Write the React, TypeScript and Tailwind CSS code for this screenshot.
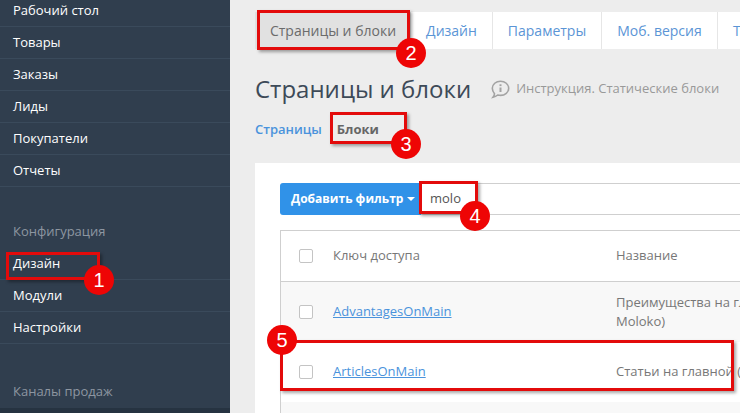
import React, { FC } from "react";

const font = { fontFamily: '"Open Sans", sans-serif' };

const NavRow: FC<{ label: string; bold?: boolean }> = ({ label, bold }) => (
  <div
    className={`h-8 shrink-0 flex items-center pl-[13px] border-b border-[#3a4a5b] text-[13px] text-white ${
      bold ? "font-medium" : ""
    }`}
  >
    {label}
  </div>
);

const Marker: FC<{ box: string; dot: string; n: number }> = ({ box, dot, n }) => (
  <>
    <div className={`absolute border-[3px] border-[#e30b0b] shadow-[2px_2px_3px_rgba(0,0,0,0.35)] ${box}`} />
    <div
      className={`absolute w-[30px] h-[30px] rounded-full bg-[#ee0505] text-white text-[20px] leading-[30px] text-center font-[Liberation_Sans] ${dot}`}
    >
      {n}
    </div>
  </>
);

const Checkbox: FC = () => (
  <div className="w-[14px] h-[14px] rounded-[2px] border border-[#c4c4c4] bg-white shrink-0" />
);

const Tab: FC<{ label: string; w: string }> = ({ label, w }) => (
  <div className={`${w} shrink-0 h-full flex items-center justify-center border-r border-[#e6e6e6] text-[#5b95d6]`}>
    {label}
  </div>
);

const App: FC = () => {
  return (
    <div className="relative w-[740px] h-[413px] overflow-hidden flex bg-[#ededed]" style={font}>
      {/* sidebar */}
      <aside className="w-[230px] h-[418px] bg-[#303e4e] flex flex-col shrink-0 -mt-[5px]">
        <NavRow label="Рабочий стол" />
        <NavRow label="Товары" />
        <NavRow label="Заказы" />
        <NavRow label="Лиды" />
        <NavRow label="Покупатели" />
        <NavRow label="Отчеты" />
        <div className="h-[29px] shrink-0" />
        <div className="h-[32px] shrink-0 flex items-center pl-[13px] text-[13px] text-[#8d96a1]">Конфигурация</div>
        <NavRow label="Дизайн" bold />
        <NavRow label="Модули" bold />
        <NavRow label="Настройки" bold />
        <div className="h-[31px] shrink-0" />
        <div className="h-[33px] shrink-0 flex items-center pl-[13px] text-[13px] text-[#8d96a1]">Каналы продаж</div>
        <div className="flex-1 bg-[#263341]" />
      </aside>

      {/* main */}
      <main className="flex-1 min-w-0 pl-[25px]">
        <div className="flex h-[37px] mt-[12px] text-[14px] whitespace-nowrap">
          <div className="w-[156px] shrink-0 h-full flex items-center justify-center bg-[#e1e1e1] text-[#6b6b6b]">
            Страницы и блоки
          </div>
          <div className="w-[82px] shrink-0 h-full flex items-center justify-center bg-white border-r border-[#e6e6e6] text-[#5b95d6]">
            Дизайн
          </div>
          <div className="flex flex-1 h-full bg-white">
            <Tab label="Параметры" w="w-[109px]" />
            <Tab label="Моб. версия" w="w-[116px]" />
            <div className="flex-1 h-full pl-[15px] flex items-center text-[#5b95d6] overflow-hidden">Т</div>
          </div>
        </div>

        <div className="flex items-center mt-[22px] h-[36px]">
          <h1 className="text-2xl text-[#3d4a58] whitespace-nowrap">Страницы и блоки</h1>
          <svg className="ml-[20px] w-[19px] h-[19px] text-[#a3a3a3]" viewBox="0 0 19 19" fill="none" stroke="currentColor">
            <path d="M9.5 1.2c4.5 0 8.2 3.1 8.2 7.1s-3.7 7.1-8.2 7.1c-1 0-1.900-.2-2.800-.4-1.200 1-2.800 1.900-4.700 2.300.8-1 1.400-2.200 1.500-3.600C2.100 12 1.300 10.300 1.300 8.300c0-4 3.700-7.100 8.200-7.100z" strokeWidth="1.6" />
            <path d="M9.500 7.500v4.500" strokeWidth="2" />
            <path d="M9.500 4.300v1.800" strokeWidth="2" />
          </svg>
          <span className="ml-[6px] text-[13px] text-[#999] whitespace-nowrap">Инструкция. Статические блоки</span>
        </div>

        <div className="flex items-center mt-[13px] h-[20px] text-[13px] font-semibold">
          <span className="text-[#4a93dc]">Страницы</span>
          <span className="ml-[15px] text-[#666] font-bold">Блоки</span>
        </div>

        {/* card */}
        <div className="mt-[23px] bg-white h-[260px] pl-[25px] pt-[20px]">
          <div className="flex h-[32px]">
            <div className="w-[141px] shrink-0 h-full rounded-l-[3px] bg-[#3092e8] text-white text-[12px] font-bold flex items-center pl-[11px] whitespace-nowrap">
              Добавить фильтр
              <span className="ml-[4px] w-0 h-0 border-x-[4px] border-x-transparent border-t-[4px] border-t-white" />
            </div>
            <div className="flex-1 border-y border-[#cfcfcf] text-[13px] text-[#555] flex items-center pl-[9px]">molo</div>
          </div>

          <div className="mt-[15px] border-l border-t border-[#cfcfcf] text-[13px] text-[#777]">
            <div className="h-[51px] flex items-center border-b border-[#cfcfcf]">
              <div className="w-[52px] shrink-0 pl-[18px]"><Checkbox /></div>
              <div className="w-[283px] shrink-0">Ключ доступа</div>
              <div>Название</div>
            </div>
            <div className="h-[60px] flex items-center bg-[#f8f8f8]">
              <div className="w-[52px] shrink-0 pl-[18px]"><Checkbox /></div>
              <a className="w-[283px] shrink-0 text-[#4a93dc] underline">AdvantagesOnMain</a>
              <div className="leading-[19px] whitespace-nowrap">
                Преимущества на главной
                <br />
                Moloko)
              </div>
            </div>
            <div className="h-[60px] flex items-center bg-white">
              <div className="w-[52px] shrink-0 pl-[18px]"><Checkbox /></div>
              <a className="w-[283px] shrink-0 text-[#4a93dc] underline">ArticlesOnMain</a>
              <div className="whitespace-nowrap">Статьи на главной (Moloko)</div>
            </div>
            <div className="h-[60px] bg-[#f8f8f8]" />
          </div>
        </div>
      </main>

      {/* annotations */}
      <Marker box="left-[6px] top-[252px] w-[94px] h-[28px]" dot="left-[84px] top-[265px]" n={1} />
      <Marker box="left-[257px] top-[10px] w-[153px] h-[40px]" dot="left-[396px] top-[38px]" n={2} />
      <Marker box="left-[330px] top-[112px] w-[77px] h-[32px]" dot="left-[391px] top-[129px]" n={3} />
      <Marker box="left-[419px] top-[181px] w-[59px] h-[33px]" dot="left-[460px] top-[201px]" n={4} />
      <Marker box="left-[280px] top-[340px] w-[454px] h-[51px]" dot="left-[267px] top-[325px]" n={5} />
    </div>
  );
};

export default App;
